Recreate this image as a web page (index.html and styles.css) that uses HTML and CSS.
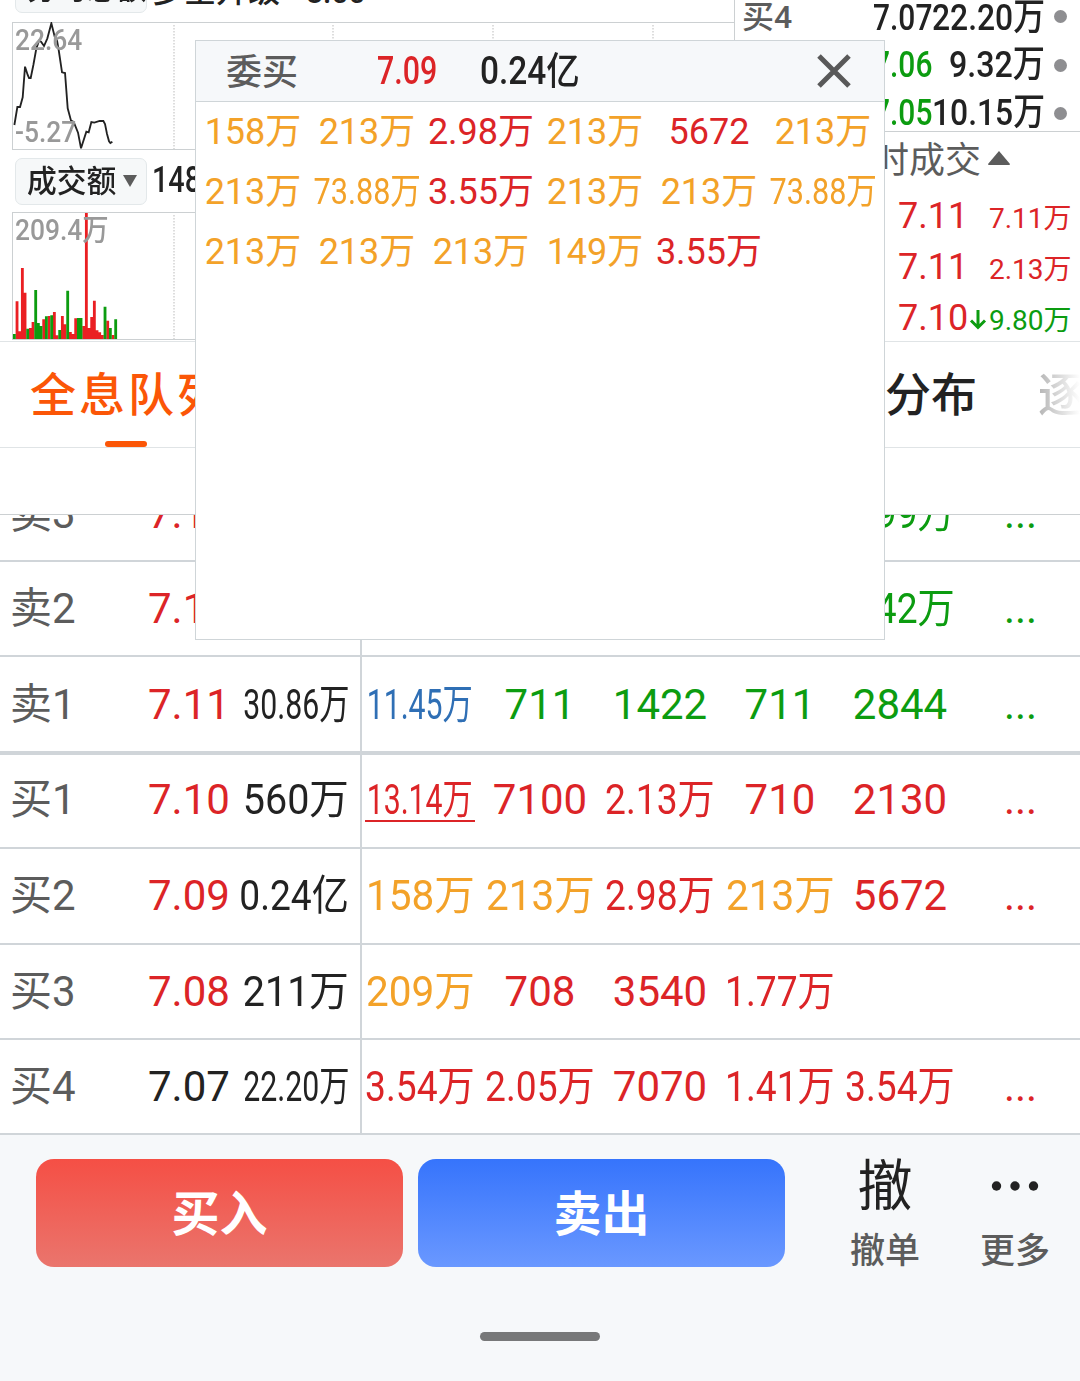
FILE: index.html
```html
<!DOCTYPE html>
<html lang="zh-CN">
<head>
<meta charset="utf-8">
<title>全息队列</title>
<link rel="stylesheet" href="styles.css">
</head>
<body>
<main class="screen">
  <section class="market">
    <div class="charts">
      <div class="indicator indicator-cut">
        <div class="picker"><span class="picker-name">分时总额</span></div>
        <span class="indicator-text">多空升级</span><span class="indicator-num">8.00</span>
      </div>
      <div class="chart">
        <svg class="plot" viewBox="0 0 722 128" width="722" height="128">
          <g class="guides"><path d="M162 3V127M321 3V127M481 3V127M641 3V127"/></g>
          <polyline class="curve" transform="translate(-12.3 -22) scale(.3333)" points="44,375 53,321 61,321 69,292 76,200 84,225 88,234 93,234 101,195 110,145 118,122 124,125 133,138 143,115 155,70 165,110 172,122 177,150 187,217 196,219 204,325 214,362 222,366 235,398 244,445 260,395 267,397 275,366 284,368 300,363 311,363 316,372 322,402 328,424 332,429 338,425"/>
        </svg>
        <span class="scale top">22.64</span>
        <span class="scale bottom">-5.27</span>
      </div>
      <div class="indicator">
        <div class="picker"><span class="picker-name">成交额</span><svg width="14" height="12" viewBox="0 0 14 12"><path d="M0 0H14L7 12Z" fill="#5c5c5c"/></svg></div>
        <span class="indicator-volume">148.2万</span>
      </div>
      <div class="chart">
        <span class="scale top volume">209.4万</span>
        <svg class="plot" viewBox="0 0 722 128" width="722" height="128">
          <g class="guides"><path d="M162 3V127M321 3V127M481 3V127M641 3V127"/></g>
          <g transform="translate(-12.3 -12) scale(.3333)" stroke-width="8.5" fill="none">
            <path stroke="#ea1f23" d="M52 304V417M60 394V417M68 204V417M76 278V417M92 384V417M100 366V417M132 358V417M148 348V417M164 336V417M172 406V417M188 348V417M196 373V417M212 396V417M220 402V417M228 355V417M252 378V417M260 39V417M268 384V417M276 351V417M284 302V417M292 391V417M300 397V417M308 405V417M324 362V417M340 405V417"/>
            <path stroke="#0c9c10" d="M44 402V417M84 386V417M108 270V417M116 369V417M124 378V417M140 349V417M156 346V417M180 390V417M204 272V417M236 354V417M244 354V417M316 320V417M332 384V417M348 358V417"/>
          </g>
        </svg>
      </div>
    </div>
    <div class="quotes">
      <div class="book">
        <div class="quote"><span class="q-name">买4</span><span class="q-price">7.07</span><span class="q-vol long">22.20万</span><i class="dot"></i></div>
        <div class="quote"><span class="q-name">买5</span><span class="q-price green">7.06</span><span class="q-vol">9.32万</span><i class="dot"></i></div>
        <div class="quote"><span class="q-name">买6</span><span class="q-price green">7.05</span><span class="q-vol long">10.15万</span><i class="dot"></i></div>
      </div>
      <div class="trades">
        <div class="trades-head">分时成交<svg width="22" height="14" viewBox="0 0 22 14"><path d="M11 0L22 13Q22 14 21 14H1Q0 14 0 13Z" fill="#5c5c5c"/></svg></div>
        <div class="trade red"><span class="t-price">7.11</span><span class="t-arrow"></span><span class="t-vol">7.11万</span></div>
        <div class="trade red"><span class="t-price">7.11</span><span class="t-arrow"></span><span class="t-vol">2.13万</span></div>
        <div class="trade red"><span class="t-price">7.10</span><span class="t-arrow"><svg width="18" height="20" viewBox="0 0 18 20"><path d="M9 0V17M2 10.5L9 17.5L16 10.5" fill="none" stroke="#0c9c10" stroke-width="3"/></svg></span><span class="t-vol green">9.80万</span></div>
      </div>
    </div>
  </section>

  <nav class="tabs">
    <span class="tab active">全息队列</span>
    <span class="tab">成交分布</span>
    <span class="tab faded">逐笔</span>
  </nav>
  <div class="spacer"></div>

  <section class="depth">
    <div class="row cut">
      <span class="name">卖3</span><span class="price red">7.13</span><span class="total"><b class="s5">15.42万</b></span>
      <div class="orders green"><span>711</span><span>713</span><span>1426</span><span>713</span><span><b class="s4">4.99万</b></span><span>...</span></div>
    </div>
    <div class="row">
      <span class="name">卖2</span><span class="price red">7.12</span><span class="total"><b class="s5">25.63万</b></span>
      <div class="orders green"><span>712</span><span>712</span><span>1424</span><span>712</span><span><b class="s4">1.42万</b></span><span>...</span></div>
    </div>
    <div class="row last-sell">
      <span class="name">卖1</span><span class="price red">7.11</span><span class="total"><b class="s5">30.86万</b></span>
      <div class="orders green"><span class="blue"><b class="s5">11.45万</b></span><span>711</span><span>1422</span><span>711</span><span>2844</span><span>...</span></div>
    </div>
    <div class="row first-buy">
      <span class="name">买1</span><span class="price red">7.10</span><span class="total"><b class="s3">560万</b></span>
      <div class="orders red"><span class="mine"><b class="s5">13.14万</b></span><span>7100</span><span><b class="s4">2.13万</b></span><span>710</span><span>2130</span><span>...</span></div>
    </div>
    <div class="row">
      <span class="name">买2</span><span class="price red">7.09</span><span class="total"><b class="s4">0.24亿</b></span>
      <div class="orders red"><span class="gold"><b class="s3">158万</b></span><span class="gold"><b class="s3">213万</b></span><span><b class="s4">2.98万</b></span><span class="gold"><b class="s3">213万</b></span><span>5672</span><span>...</span></div>
    </div>
    <div class="row">
      <span class="name">买3</span><span class="price red">7.08</span><span class="total"><b class="s3">211万</b></span>
      <div class="orders red"><span class="gold"><b class="s3">209万</b></span><span>708</span><span>3540</span><span><b class="s4">1.77万</b></span></div>
    </div>
    <div class="row">
      <span class="name">买4</span><span class="price">7.07</span><span class="total"><b class="s5">22.20万</b></span>
      <div class="orders red"><span><b class="s4">3.54万</b></span><span><b class="s4">2.05万</b></span><span>7070</span><span><b class="s4">1.41万</b></span><span><b class="s4">3.54万</b></span><span>...</span></div>
    </div>
  </section>

  <footer class="actions">
    <div class="action-row">
      <button class="trade-btn buy">买入</button>
      <button class="trade-btn sell">卖出</button>
      <div class="tool cancel"><span class="tool-icon">撤</span><span class="tool-name">撤单</span></div>
      <div class="tool more"><span class="tool-icon"><svg width="48" height="10" viewBox="0 0 48 10"><g fill="#222"><circle cx="5.5" cy="5" r="4.7"/><circle cx="24" cy="5" r="4.7"/><circle cx="42.5" cy="5" r="4.7"/></g></svg></span><span class="tool-name">更多</span></div>
    </div>
    <div class="home-bar"></div>
  </footer>

  <aside class="popup">
    <header class="popup-head">
      <span class="p-side">委买</span><span class="p-price red">7.09</span><span class="p-total">0.24亿</span>
      <svg class="close" width="34" height="34" viewBox="0 0 34 34"><path d="M2 2L32 32M32 2L2 32" stroke="#595959" stroke-width="5"/></svg>
    </header>
    <div class="popup-grid gold">
      <span>158万</span><span>213万</span><span class="red">2.98万</span><span>213万</span><span class="red">5672</span><span>213万</span>
      <span>213万</span><span><b class="p5">73.88万</b></span><span class="red">3.55万</span><span>213万</span><span>213万</span><span><b class="p5">73.88万</b></span>
      <span>213万</span><span>213万</span><span>213万</span><span>149万</span><span class="red">3.55万</span>
    </div>
  </aside>
</main>
</body>
</html>
```
FILE: styles.css
```css
* { box-sizing: border-box; }
body {
  margin: 0;
  background: #fff;
  color: #222;
  font-family: Roboto, "Noto Sans CJK SC", sans-serif;
}
b { font-weight: inherit; }
svg { display: block; flex: none; }
.screen { position: relative; width: 1080px; height: 1381px; overflow: hidden; }

.red { color: #dc2427; }
.green { color: #0c9c10; }
.blue { color: #2f6fb5; }
.gold { color: #f3a229; }

/* Charts and quotes */
.market { display: flex; height: 342px; border-bottom: 1px solid #e0e4e6; }
.charts { width: 735px; padding-left: 12px; border-right: 1px solid #ccd0d2; }
.indicator { display: flex; align-items: center; height: 62px; padding-left: 3px; white-space: nowrap; }
.indicator-cut { height: 22px; align-items: flex-end; padding-bottom: 9px; overflow: hidden; }
.picker {
  display: flex; align-items: center; flex: none;
  width: 132px; height: 47px; padding-left: 11px;
  background: #f6f8f9; border: 1px solid #e3e8ea; border-radius: 7px;
  font-size: 31px; font-weight: 500; line-height: 45px;
}
.picker-name { width: 96px; transform: scaleX(.96); transform-origin: left; }
.indicator-cut .picker-name { padding-bottom: 3px; }
.indicator-text { margin-left: 5px; width: 154px; font-size: 32px; font-weight: 500; line-height: 36px; margin-bottom: 4px; }
.indicator-num { font-size: 30px; font-weight: 500; line-height: 32px; margin-bottom: 4px; }
.indicator-volume { margin-left: 5px; font-size: 36px; font-weight: 500; line-height: 60px; margin-top: -2px; transform: scaleX(.8); transform-origin: left; }
.chart { position: relative; height: 128px; border: 1px solid #ccd0d2; border-right: 0; }
.plot { margin: -1px 0 0 -1px; }
.guides path { stroke: #bbb; stroke-width: 1; stroke-dasharray: 1.5 1.5; }
.curve { fill: none; stroke: #222; stroke-width: 5.5; }
.scale {
  position: absolute; left: 2px;
  color: #999; font-size: 30px; font-weight: 500; line-height: 34px;
  transform: scaleX(.88); transform-origin: left;
}
.scale.top { top: 0; }
.scale.bottom { bottom: 0; }

.quotes { width: 345px; }
.book { height: 132px; border-bottom: 1px solid #ccd0d2; overflow: hidden; }
.quote { display: flex; align-items: center; height: 48px; padding: 0 13px 0 7px; font-size: 37px; line-height: 48px; white-space: nowrap; font-weight: 500; }
.book .quote:first-child { height: 41px; line-height: 35px; align-items: flex-start; }
.quote:first-child .dot { margin-top: 10px; }
.q-name { width: 131px; font-size: 32px; color: #5c5c5c; }
.q-price { width: 60px; transform: scaleX(.81); transform-origin: left; }
.q-vol { width: 112px; display: flex; justify-content: flex-end; transform: scaleX(.87); transform-origin: right; }
.q-vol.long { transform: scaleX(.86); }
.dot { flex: none; width: 13px; height: 13px; margin-left: auto; border-radius: 50%; background: #8e8e91; }

.trades-head { display: flex; align-items: center; gap: 7px; height: 59px; padding-left: 102px; color: #5c5c5c; font-size: 36px; line-height: 61px; }
.trades-head svg { margin-top: -8px; }
.trade { display: flex; align-items: baseline; height: 51px; padding: 0 7px 0 163px; line-height: 51px; font-size: 36px; }
.t-price { width: 71px; }
.t-arrow { width: 20px; }
.t-vol { width: 84px; font-size: 28px; line-height: 40px; white-space: nowrap; }

/* Tabs */
.tabs { display: flex; align-items: center; height: 106px; padding-left: 30px; border-bottom: 1px solid #e0e4e6; white-space: nowrap; font-size: 46px; font-weight: 500; line-height: 106px; }
.tab { flex: none; }
.tab.active { position: relative; width: 756px; color: #fb5607; letter-spacing: 3px; }
.tab.active::after { content: ""; position: absolute; left: 75px; bottom: 1px; width: 42px; height: 6px; border-radius: 3px; background: #fb5607; }
.tab:nth-child(2) { width: 252px; padding-left: 7px; }
.tab.faded { width: 42px; overflow: hidden; color: transparent; background: linear-gradient(90deg, #b4b4b4, #fff); background-clip: text; -webkit-background-clip: text; }
.spacer { height: 67px; border-bottom: 1px solid #ccd0d2; }

/* Order queue */
.row { display: flex; height: 95.3px; border-bottom: 2px solid #d0d5d9; font-size: 42px; line-height: 93px; white-space: nowrap; }
.row.cut { height: 47px; line-height: 93px; align-items: flex-end; overflow: hidden; }
.row.last-sell { height: 98px; line-height: 95px; border-bottom-width: 4px; }
.row.first-buy { height: 94px; line-height: 90px; }
.name { width: 137px; padding-left: 10px; flex: none; color: #5c5c5c; }
.price { width: 84px; margin-left: 11px; flex: none; }
.total { width: 128px; padding-right: 11px; display: flex; justify-content: flex-end; flex: none; }
.total b { transform-origin: right; }
.orders { display: grid; grid-template-columns: repeat(6, 120px); flex: none; width: 720px; border-left: 2px solid #d0d5d9; }
.orders span { display: flex; justify-content: center; margin-left: -2px; margin-right: 2px; }
.orders span:nth-child(6) { padding-left: 1px; }
.s3 { transform: scaleX(.965); }
.s4 { transform: scaleX(.885); }
.s5 { transform: scaleX(.72); }
.total .s3 { transform: scaleX(.94); }
.mine { position: relative; }
.mine::after { content: ""; position: absolute; left: 5px; right: 5px; top: 65px; height: 2px; background: #dc2427; }

/* Bottom bar */
.actions { height: 247px; padding-top: 24px; background: #f6f8fa; }
.action-row { display: flex; gap: 15px; height: 108px; padding-left: 36px; }
.trade-btn { width: 367px; height: 108px; padding: 4px 0 0; border: 0; border-radius: 18px; color: #fff; font: 700 48px/104px Roboto, "Noto Sans CJK SC", sans-serif; }
.buy { background: linear-gradient(#f54f45, #ea756d); }
.sell { background: linear-gradient(#3674fc, #6a98ff); }
.tool { display: flex; flex-direction: column; align-items: center; }
.cancel { width: 100px; margin-left: 35px; }
.more { width: 100px; margin-left: 15px; }
.tool-icon { display: flex; align-items: center; flex: none; height: 54px; font-size: 55px; line-height: 54px; }
.cancel .tool-icon { line-height: 58px; }
.tool-name { flex: none; margin-top: 13px; font-size: 35px; font-weight: 500; line-height: 52px; color: #5c5c5c; }
.home-bar { width: 120px; height: 9px; margin: 65px auto 0; border-radius: 5px; background: #777879; }

/* Popup */
.popup { position: absolute; left: 195px; top: 40px; width: 690px; height: 600px; background: #fff; border: 1px solid #cfd5d8; }
.popup-head { display: flex; align-items: center; height: 61px; padding: 0 33px 0 30px; background: #f6f8fa; border-bottom: 1px solid #cfd5d8; font-size: 38px; font-weight: 500; line-height: 60px; }
.p-side { width: 151px; padding-top: 3px; color: #5c5c5c; font-size: 36px; }
.p-price { width: 103px; transform: scaleX(.8); transform-origin: left; }
.p-total { transform: scaleX(.88); transform-origin: left; }
.close { margin-left: auto; }
.popup-grid { display: grid; grid-template-columns: repeat(6, 114px); grid-auto-rows: 60px; font-size: 36px; line-height: 60px; white-space: nowrap; }
.popup-grid span { display: flex; justify-content: center; }
.p5 { transform: scaleX(.85); }
```
